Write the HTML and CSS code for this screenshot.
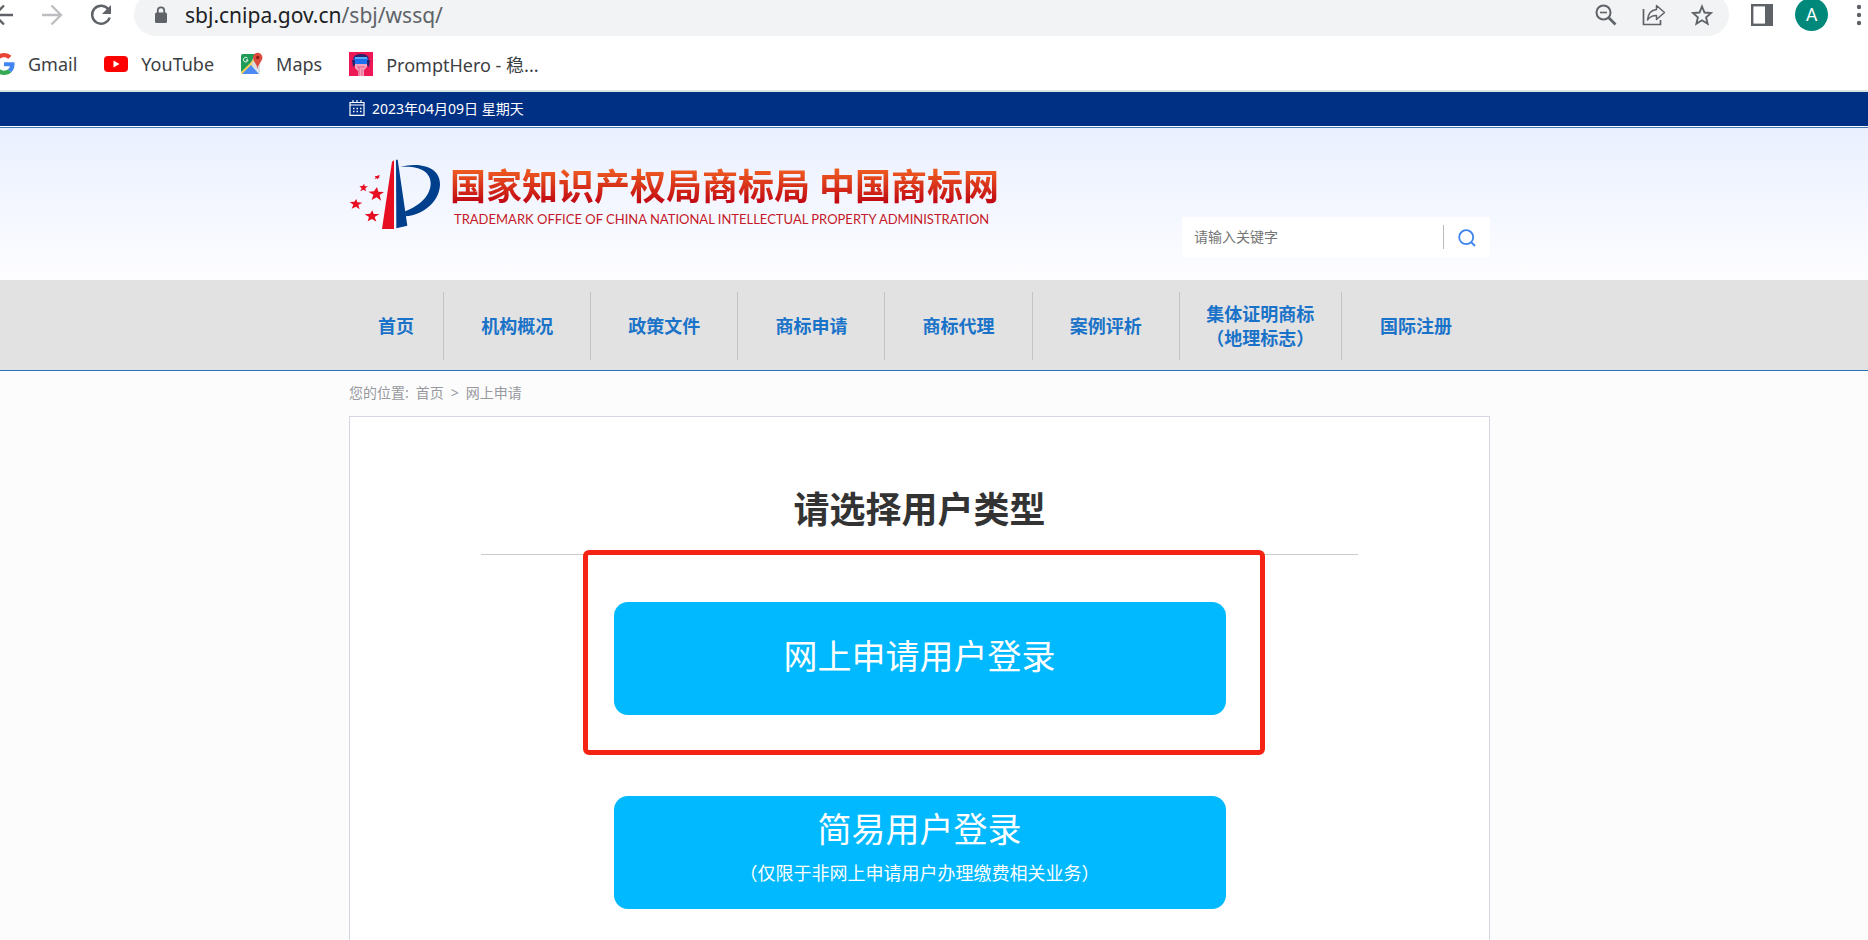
FILE: index.html
```html
<!DOCTYPE html>
<html lang="zh-CN">
<head>
  <meta charset="UTF-8">
  <meta name="viewport" content="width=device-width, initial-scale=1.0">
  <title>网上申请 - 中国商标网</title>
  <link rel="stylesheet" href="styles.css">
</head>
<body>
  <!-- 浏览器工具栏 -->
  <div class="browser">
    <div class="toolbar">
      <button class="tool-btn history" aria-label="Back">
        <svg width="22" height="22" viewBox="0 0 22 22"><path d="M21 11H3M12 1.500L2.500 11l9.500 9.500" fill="none" stroke="#5f6368" stroke-width="2.300"/></svg>
      </button>
      <button class="tool-btn history" aria-label="Forward">
        <svg width="22" height="22" viewBox="0 0 22 22"><path d="M1 11h18M10.500 1.500L20 11l-9.500 9.500" fill="none" stroke="#bcbec1" stroke-width="2.300"/></svg>
      </button>
      <button class="tool-btn" aria-label="Reload">
        <svg width="22" height="22" viewBox="0 0 22 22"><path d="M18.500 5.500A9 9 0 1 0 19.700 13.500" fill="none" stroke="#5f6368" stroke-width="2.400"/><path d="M21 1v9h-9z" fill="#5f6368"/></svg>
      </button>
      <div class="address">
        <svg width="14" height="18" viewBox="0 0 14 18"><rect x="1" y="6.500" width="12" height="10.500" rx="1.500" fill="#5f6368"/><path d="M3.800 8V4.500a3.200 3.200 0 0 1 6.400 0V8" fill="none" stroke="#5f6368" stroke-width="1.800"/></svg>
        <span class="url">sbj.cnipa.gov.cn<span class="url-path">/sbj/wssq/</span></span>
        <button class="tool-btn" aria-label="Zoom">
          <svg width="22" height="22" viewBox="0 0 22 22"><circle cx="8.500" cy="8.500" r="7" fill="none" stroke="#5f6368" stroke-width="2"/><path d="M5 8.500h7" stroke="#5f6368" stroke-width="1.600"/><path d="M13.500 13.500l7 7" stroke="#5f6368" stroke-width="2.600"/></svg>
        </button>
        <button class="tool-btn" aria-label="Share">
          <svg width="24" height="22" viewBox="0 0 24 22"><path d="M1.500 5v15.500h17V16" fill="none" stroke="#5f6368" stroke-width="1.700"/><path d="M14.500 1.500l8 7-8 7v-4C10 11.500 7.500 13 5.500 16c.5-6 4-10 9-10.500z" fill="none" stroke="#5f6368" stroke-width="1.500" stroke-linejoin="round"/></svg>
        </button>
        <button class="tool-btn" aria-label="Bookmark">
          <svg width="22" height="22" viewBox="0 0 22 22"><path d="M11 2.500l2.500 6 6.500.6-4.900 4.300 1.500 6.300L11 16.300l-5.600 3.400 1.500-6.300L2 9.100l6.500-.6z" fill="none" stroke="#5f6368" stroke-width="1.900"/></svg>
        </button>
      </div>
      <button class="tool-btn" aria-label="Side panel">
        <svg width="22" height="22" viewBox="0 0 22 22"><rect x="1.200" y="1.200" width="19.600" height="19.600" fill="none" stroke="#5f6368" stroke-width="2.400"/><rect x="14" y="1" width="7" height="20" fill="#5f6368"/></svg>
      </button>
      <span class="avatar">A</span>
      <button class="tool-btn menu" aria-label="Menu">
        <svg width="6" height="22" viewBox="0 0 6 22"><g fill="#5f6368"><circle cx="3" cy="3" r="2.200"/><circle cx="3" cy="11" r="2.200"/><circle cx="3" cy="19" r="2.200"/></g></svg>
      </button>
    </div>
    <div class="bookmarks">
      <a class="bookmark" href="#">
        <svg width="22" height="22" viewBox="0 0 48 48"><path fill="#ea4335" d="M24 9.500c3.500 0 6.700 1.200 9.200 3.600l6.900-6.900C35.900 2.400 30.500 0 24 0 14.600 0 6.500 5.400 2.600 13.200l8 6.200C12.400 13.700 17.700 9.500 24 9.500z"/><path fill="#4285f4" d="M47 24.600c0-1.600-.2-3.100-.4-4.600H24v9h12.900c-.6 3-2.300 5.500-4.800 7.200l7.700 6C44.400 38 47 31.800 47 24.600z"/><path fill="#fbbc05" d="M10.500 28.600a14.500 14.500 0 0 1 0-9.200l-8-6.200a24 24 0 0 0 0 21.600z"/><path fill="#34a853" d="M24 48c6.500 0 11.900-2.100 15.900-5.800l-7.700-6c-2.200 1.500-4.900 2.300-8.200 2.300-6.300 0-11.600-4.200-13.500-9.900l-8 6.200C6.500 42.600 14.600 48 24 48z"/></svg>
        <span>Gmail</span>
      </a>
      <a class="bookmark" href="#">
        <svg width="24" height="18" viewBox="0 0 24 18"><rect y="1" width="24" height="16" rx="4" fill="#f00"/><path d="M9.500 5.500v7l6-3.500z" fill="#fff"/></svg>
        <span>YouTube</span>
      </a>
      <a class="bookmark" href="#">
        <svg width="22" height="24" viewBox="0 0 22 24"><rect y="2" width="19" height="20" rx="1.500" fill="#e8eaed"/><path d="M0 20V4q0-2 2-2h12l-4 9z" fill="#1e9b57"/><path d="M0 20.500L17 3l2 4L3 22H1z" fill="#fbd04b"/><path d="M1 22l9-9 8 9z" fill="#4c8bf5"/><path d="M10 12l9 9V9l-4-2z" fill="#d9dce0"/><path d="M16.500 17C16 12 12 9.500 12 5.500a4.700 4.700 0 0 1 9.400 0C21.400 9.500 17 12 16.500 17z" fill="#dd4b3e"/><circle cx="16.700" cy="5.500" r="1.700" fill="#8c1d18"/><path d="M6.500 6.200A2.300 2.300 0 1 0 7 8H5" fill="none" stroke="#fff" stroke-width="1"/></svg>
        <span>Maps</span>
      </a>
      <a class="bookmark" href="#">
        <svg width="24" height="24" viewBox="0 0 24 24"><rect width="24" height="24" fill="#ee1856"/><path d="M6 8h12v7l-3 3v6H9v-5l-3-3z" fill="#f5a3bd"/><path d="M10 15v9M13 17v7M8 15h8" stroke="#e55c88"/><path d="M4 7q1-5 8-5t8 5l-2 1H6z" fill="#2b236d"/><rect x="5" y="5" width="14" height="7" rx="2" fill="#1c6ff0"/><path d="M6 6h12" stroke="#6fc2ff" stroke-width="1.500"/><path d="M3 8h3v5l-2 2zM21 8h-3v5l2 2z" fill="#2b236d"/></svg>
        <span>PromptHero - 稳...</span>
      </a>
    </div>
  </div>

  <div class="topbar">
    <div class="wrap date">
      <svg width="16" height="16" viewBox="0 0 16 16"><path d="M1 2.500h14v12.800H1zM1 5h14" fill="none" stroke="#fff" stroke-width="1.200"/><path d="M4 0v3M8 0v3M12 0v3" stroke="#fff" stroke-width="1.200"/><path d="M4 8.500h9M4 11.500h9" stroke="#fff" stroke-width="1.500" stroke-dasharray="1.500 2"/></svg>
      <span>2023年04月09日 星期天</span>
    </div>
  </div>

  <header class="header">
    <div class="wrap header-inner">
      <a class="logo" href="#">
        <svg width="93" height="73" viewBox="57 55 279 219">
          <path d="M186 66l6-4v206h-36z" fill="#e60e20"/>
          <path d="M198 60h5l29 198-33 8z" fill="#003f8c"/>
          <path d="M210 82C266 66 330 80 330 133c0 50-46 92-104 97l-1-15c45-16 77-48 77-84 0-40-43-54-92-49z" fill="#003f8c"/>
          <g fill="#e60e20">
            <path d="M141 142l4 14 17 1-13 9 4 17-13-10-15 8 5-16-15-9 17-1z"/>
            <path d="M79 178l3 10 15 1-12 7 4 13-11-8-13 6 5-12-11-8 14-1z"/>
            <path d="M127 212l4 11 17 0-14 9 5 14-13-8-13 7 4-13-13-8 16-2z"/>
            <path d="M103 132l1 8 10 0-8 6 2 9-8-5-9 5 4-9-7-6 9-1z"/>
            <path d="M149 105l-2 6 3 1-5 3-1 4-4-3-6 3 3-6-3-4 7 0z"/>
          </g>
        </svg>
        <span class="logo-text">
          <span class="logo-cn">国家知识产权局商标局 中国商标网</span>
          <span class="logo-en">TRADEMARK OFFICE OF CHINA NATIONAL INTELLECTUAL PROPERTY ADMINISTRATION</span>
        </span>
      </a>
      <form class="search">
        <input type="text" placeholder="请输入关键字" aria-label="请输入关键字">
        <button type="button" aria-label="搜索">
          <svg width="18" height="18" viewBox="0 0 18 18"><circle cx="8.200" cy="8.200" r="7" fill="none" stroke="#3d84f0" stroke-width="1.800"/><path d="M13 13l4 4" stroke="#3d84f0" stroke-width="1.800"/></svg>
        </button>
      </form>
    </div>
  </header>

  <nav class="nav">
    <div class="wrap nav-list">
      <a href="#">首页</a>
      <a href="#">机构概况</a>
      <a href="#">政策文件</a>
      <a href="#">商标申请</a>
      <a href="#">商标代理</a>
      <a href="#">案例评析</a>
      <a href="#">集体证明商标<br>（地理标志）</a>
      <a href="#">国际注册</a>
    </div>
  </nav>

  <div class="content">
    <div class="wrap breadcrumb">
      <span>您的位置:</span>
      <a href="#">首页</a>
      <span>&gt;</span>
      <a href="#">网上申请</a>
    </div>

    <main class="wrap panel">
      <h1 class="title">请选择用户类型</h1>
      <div class="options">
        <div class="option marked">
          <button class="login-btn">网上申请用户登录</button>
        </div>
        <div class="option">
          <button class="login-btn">简易用户登录<small>（仅限于非网上申请用户办理缴费相关业务）</small></button>
        </div>
      </div>
    </main>
  </div>
</body>
</html>
```
FILE: styles.css
```css
* {
  box-sizing: border-box;
}

body {
  margin: 0;
  min-height: 100vh;
  display: flex;
  flex-direction: column;
  background-color: #fcfcfc;
  font-family: "Noto Sans", "Noto Sans CJK SC", sans-serif;
  font-size: 14px;
  color: #333;
}

a {
  color: inherit;
  text-decoration: none;
}

button {
  margin: 0;
  padding: 0;
  border: none;
  background: none;
  font-family: inherit;
  cursor: pointer;
}

svg {
  display: block;
  flex-shrink: 0;
}

.wrap {
  width: 100%;
  max-width: 1141px;
  margin: 0 auto;
}

/* 浏览器 */
.browser {
  height: 92px;
  background-color: #fff;
  border-bottom: 2px solid #dbe3e0;
  overflow: hidden;
}

.toolbar {
  display: flex;
  align-items: center;
  gap: 22px;
  height: 43px;
  margin-top: -7px;
  margin-left: -8px;
  padding-right: 6px;
}

.history {
  margin-right: 5px;
}

.menu {
  margin-left: 6px;
}

.address {
  flex: 1;
  display: flex;
  align-items: center;
  gap: 25px;
  height: 43px;
  padding: 0 16px 0 20px;
  border-radius: 22px;
  background-color: #f1f3f4;
}

.url {
  flex: 1;
  margin-left: -8px;
  font-size: 21px;
  line-height: 28px;
  color: #202124;
}

.url-path {
  color: #5f6368;
}

.avatar {
  width: 33px;
  height: 33px;
  border-radius: 50%;
  background-color: #00897b;
  color: #fff;
  font-family: Roboto, sans-serif;
  font-size: 18px;
  line-height: 33px;
  text-align: center;
}

.bookmarks {
  display: flex;
  align-items: center;
  gap: 27px;
  height: 55px;
  margin-left: -7px;
  font-size: 18px;
  color: #3c4043;
}

.bookmark {
  display: flex;
  align-items: center;
  gap: 13px;
}

/* 日期栏 */
.topbar {
  padding-right: 29px;
  background-color: #003084;
  color: #fff;
}

.date {
  display: flex;
  align-items: center;
  gap: 7px;
  height: 34px;
  padding-bottom: 2px;
}

/* 页头 */
.header {
  padding-right: 29px;
  border-top: 1px solid #fff;
  background: linear-gradient(#4378ad 1px, #eaf0ff 1px, #fdfdff);
}

.header-inner {
  display: flex;
  justify-content: space-between;
  height: 153px;
}

.logo {
  display: flex;
  align-items: flex-start;
  gap: 8px;
  padding-top: 31px;
}

.logo-text {
  display: flex;
  flex-direction: column;
  padding-top: 8px;
}

.logo-cn {
  font-family: "Liberation Serif", "Noto Sans CJK SC", serif;
  font-size: 36px;
  font-weight: bold;
  line-height: 44px;
  white-space: nowrap;
  background: linear-gradient(#ee5a20 10%, #bc0012 90%);
  -webkit-background-clip: text;
  background-clip: text;
  color: transparent;
}

.logo-en {
  padding-left: 4px;
  font-family: Lato, sans-serif;
  font-size: 13px;
  line-height: 18px;
  white-space: nowrap;
  color: #c41a28;
}

.search {
  display: flex;
  align-items: center;
  width: 308px;
  height: 40px;
  margin-top: 90px;
  background-color: #fff;
}

.search input {
  flex: 1;
  min-width: 0;
  height: 24px;
  padding: 0 12px 2px;
  border: none;
  border-right: 1px solid #bbb;
  outline: none;
  font-family: inherit;
  font-size: 14px;
}

.search input::placeholder {
  color: #757575;
}

.search button {
  display: flex;
  justify-content: center;
  width: 46px;
  padding-top: 2px;
}

/* 导航 */
.nav {
  padding: 12px 29px 10px 0;
  border-bottom: 1px solid #2a72b5;
  background-color: #e2e2e2;
}

.nav-list {
  display: grid;
  grid-template-columns: 95fr repeat(5, 147fr) 162fr 148fr;
  height: 68px;
}

.nav-list a {
  display: flex;
  align-items: center;
  justify-content: center;
  border-right: 1px solid #c4c4c4;
  font-size: 18px;
  font-weight: bold;
  line-height: 24px;
  text-align: center;
  white-space: nowrap;
  color: #1a73c8;
}

.nav-list a:last-child {
  border-right: none;
}

.content {
  flex: 1;
  display: flex;
  flex-direction: column;
  padding-right: 29px;
}

/* 面包屑 */
.breadcrumb {
  display: flex;
  align-items: center;
  gap: 7px;
  height: 45px;
  padding-bottom: 3px;
  color: #98999f;
}

/* 用户类型 */
.panel {
  flex: 1;
  border: 1px solid #d3d8e2;
  border-bottom: none;
  background-color: #fff;
}

.title {
  width: 77%;
  margin: 67px auto 0;
  padding-bottom: 18px;
  border-bottom: 1px solid #ccc;
  font-size: 36px;
  line-height: 52px;
  text-align: center;
}

.options {
  display: flex;
  flex-direction: column;
  align-items: center;
  gap: 81px;
  padding: 47px 0 30px;
}

.option {
  position: relative;
  width: 612px;
}

/* 红色标注框 */
.marked::after {
  content: "";
  position: absolute;
  top: -52px;
  right: -39px;
  bottom: -40px;
  left: -31px;
  border: 5px solid #f42314;
  border-radius: 6px;
  pointer-events: none;
}

.login-btn {
  display: block;
  width: 100%;
  height: 113px;
  padding-bottom: 6px;
  border-radius: 14px;
  background-color: #00b9ff;
  color: #fff;
  font-size: 34px;
  line-height: 50px;
}

.login-btn small {
  display: block;
  padding-bottom: 4px;
  font-size: 18px;
  line-height: 38px;
}
```
